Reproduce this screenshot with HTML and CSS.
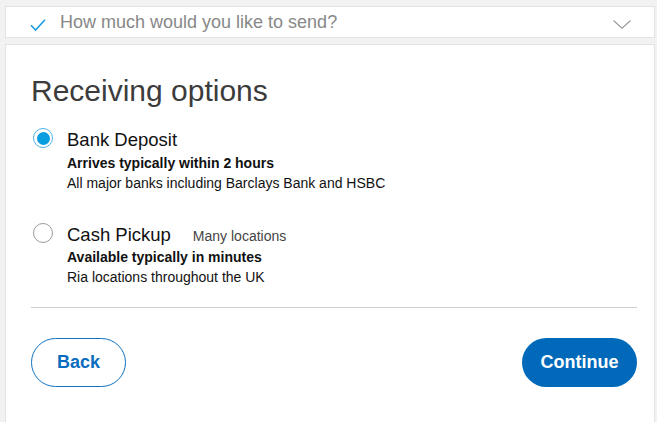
FILE: index.html
```html
<!DOCTYPE html>
<html lang="en">
<head>
<meta charset="utf-8">
<title>Receiving options</title>
<link rel="stylesheet" href="styles.css">
</head>
<body>
<div class="wrap">
  <div class="step">
    <svg class="check" width="16" height="12" viewBox="0 0 16 12" aria-hidden="true">
      <path d="M1 6.2 L5.6 11 L15 0.8" fill="none" stroke="#1a9be0" stroke-width="1.6"/>
    </svg>
    <span class="step-title">How much would you like to send?</span>
    <svg class="chev" width="18" height="9" viewBox="0 0 18 9" aria-hidden="true">
      <path d="M0.5 0.5 L9 8.2 L17.5 0.5" fill="none" stroke="#9a9a9a" stroke-width="1.1"/>
    </svg>
  </div>
  <div class="card">
    <h1 class="heading">Receiving options</h1>
    <div class="option">
      <span class="radio radio-on"><span class="dot"></span></span>
      <div class="opt-body">
        <div class="opt-head"><span class="opt-title">Bank Deposit</span></div>
        <div class="opt-strong">Arrives typically within 2 hours</div>
        <div class="opt-text">All major banks including Barclays Bank and HSBC</div>
      </div>
    </div>
    <div class="option option-2">
      <span class="radio"></span>
      <div class="opt-body">
        <div class="opt-head"><span class="opt-title">Cash Pickup</span><span class="opt-note">Many locations</span></div>
        <div class="opt-strong">Available typically in minutes</div>
        <div class="opt-text">Ria locations throughout the UK</div>
      </div>
    </div>
    <hr class="divider">
    <div class="actions">
      <button class="btn btn-back">Back</button>
      <button class="btn btn-continue">Continue</button>
    </div>
  </div>
</div>
</body>
</html>
```

FILE: styles.css
```css
html, body {
  margin: 0;
  padding: 0;
  background: #f2f2f2;
  font-family: "Liberation Sans", Arial, Helvetica, sans-serif;
  overflow: hidden;
}
.wrap {
  padding: 6px 2px 0 5px;
}
.step {
  height: 30px;
  background: #fff;
  border: 1px solid #e3e3e3;
  display: flex;
  align-items: center;
  padding: 0 23px 0 24px;
}
.check {
  display: block;
  margin-top: 5px;
}
.step-title {
  margin-left: 14px;
  font-size: 18px;
  color: #888;
  flex: 1;
  line-height: 22px;
}
.chev {
  display: block;
  margin-top: 5px;
}
.card {
  margin-top: 6px;
  background: #fff;
  border: 1px solid #e3e3e3;
  border-bottom: none;
  padding: 28px 17px 60px 25px;
}
.heading {
  margin: 0;
  font-size: 30px;
  line-height: 36px;
  font-weight: normal;
  color: #3c3c3c;
}
.option {
  display: flex;
  align-items: flex-start;
  margin-top: 20px;
}
.option-2 {
  margin-top: 31px;
}
.radio {
  flex: none;
  box-sizing: border-box;
  width: 20px;
  height: 20px;
  border-radius: 50%;
  border: 1px solid #9a9a9a;
  background: #fff;
  margin: -1px 14px 0 2px;
  display: flex;
  align-items: center;
  justify-content: center;
}
.radio-on {
  border: 1.5px solid #4fb3e8;
}
.dot {
  width: 13px;
  height: 13px;
  border-radius: 50%;
  background: #0a9de0;
}
.opt-head {
  display: flex;
  align-items: baseline;
  gap: 22px;
}
.opt-title {
  font-size: 18.5px;
  line-height: 22px;
  color: #111;
}
.opt-note {
  font-size: 14px;
  color: #444;
}
.opt-strong {
  margin-top: 1.5px;
  font-size: 14px;
  line-height: 20px;
  font-weight: bold;
  color: #111;
}
.opt-text {
  font-size: 14px;
  line-height: 20px;
  color: #111;
}
.divider {
  margin: 20px 0 0 0;
  border: none;
  border-top: 1px solid #cfcfcf;
  height: 0;
}
.actions {
  margin-top: 30px;
  display: flex;
  justify-content: space-between;
}
.btn {
  height: 49px;
  border-radius: 25px;
  font-family: inherit;
  font-size: 18px;
  font-weight: bold;
  cursor: pointer;
}
.btn-back {
  width: 95px;
  background: #fff;
  color: #0a6cbe;
  border: 1px solid #1071c0;
}
.btn-continue {
  width: 115px;
  background: #0069ba;
  color: #fff;
  border: none;
}
```
